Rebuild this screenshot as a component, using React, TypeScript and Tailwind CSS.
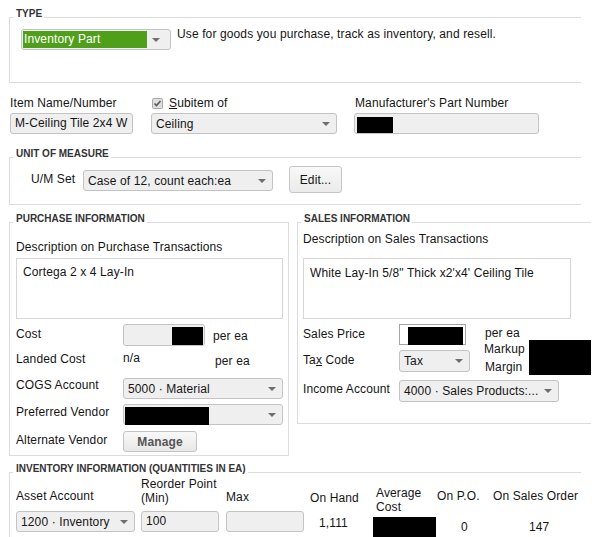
import React from "react";

function Arrow() {
  return (
    <svg width="8" height="4" viewBox="0 0 8 4" className="block">
      <path d="M0 0H8L4 4Z" fill="#6e6e6e" />
    </svg>
  );
}

function Select({ className = "", children }: { className?: string; children?: React.ReactNode }) {
  return (
    <div className={`flex items-center border border-[#c3c3c3] rounded-[3px] bg-[#efefef] shrink-0 ${className}`}>
      <div className="flex-1 min-w-0 overflow-hidden whitespace-nowrap pl-[4px]">{children}</div>
      <div className="w-[20px] shrink-0 flex justify-center">
        <Arrow />
      </div>
    </div>
  );
}

function Legend({ children }: { children: React.ReactNode }) {
  return (
    <legend className="pl-[3px] pr-[2px] pb-[7px] text-[10px] leading-[10px] font-bold tracking-normal text-[#333]">
      {children}
    </legend>
  );
}

function Checkbox() {
  return (
    <svg width="11" height="11" viewBox="0 0 11 11" className="block ml-[1px]">
      <rect x="0.5" y="0.5" width="10" height="10" rx="1" fill="#dedede" stroke="#a9a9a9" />
      <path d="M2.5 5.5L4.5 7.5L8.5 3" stroke="#595959" strokeWidth="1.6" fill="none" />
    </svg>
  );
}

const field = "border border-[#c3c3c3] rounded-[3px] bg-[#efefef] shrink-0";

export default function App() {
  return (
    <div className="w-[598px] h-[537px] overflow-hidden bg-white font-['Liberation_Sans',Arial,sans-serif] text-[12px] leading-[14px] tracking-[0.12px] text-[#151515]">
      {/* Type */}
      <fieldset className="ml-[9px] mt-[9px] w-[572px] border-t border-l border-b border-[#dcdcdc] pl-[3px] pb-[32px]">
        <Legend>TYPE</Legend>
        <div className="flex items-start mt-[3px]">
          <div className="ml-[8px] w-[150px] h-[21px] flex border border-[#c3c3c3] rounded-[3px] bg-[#efefef] p-[1px] shrink-0">
            <div className="flex-1 bg-[#4f9f1b] text-white pl-[1px] leading-[17px]">Inventory Part</div>
            <div className="w-[22px] flex items-center justify-center pr-[4px]">
              <Arrow />
            </div>
          </div>
          <div className="ml-[6px] -mt-[2px]">Use for goods you purchase, track as inventory, and resell.</div>
        </div>
      </fieldset>

      {/* Item name row */}
      <div className="flex items-start ml-[10px] mt-[13px]">
        <div className="w-[123px] shrink-0">
          <div>Item Name/Number</div>
          <div className={`mt-[3px] h-[21px] pl-[4px] leading-[19px] overflow-hidden whitespace-nowrap ${field}`}>
            M-Ceiling Tile 2x4 W
          </div>
        </div>
        <div className="ml-[18px] w-[186px] shrink-0">
          <div className="flex items-center h-[14px]">
            <Checkbox />
            <span className="ml-[6px] -mt-[1px]">
              <u>S</u>ubitem of
            </span>
          </div>
          <Select className="mt-[3px] h-[21px] w-[186px]">Ceiling</Select>
        </div>
        <div className="ml-[17px] w-[185px] shrink-0">
          <div className="ml-[1px]">Manufacturer's Part Number</div>
          <div className={`mt-[3px] h-[21px] flex items-start pl-[2px] pt-[3px] ${field}`}>
            <div className="w-[36px] h-[16px] bg-black" />
          </div>
        </div>
      </div>

      {/* Unit of measure */}
      <fieldset className="ml-[9px] mt-[15px] w-[572px] border-t border-l border-b border-[#dcdcdc] pl-[3px] pb-[11px]">
        <Legend>UNIT OF MEASURE</Legend>
        <div className="flex items-start">
          <div className="ml-[18px] w-[52px] mt-[6px] shrink-0">U/M Set</div>
          <Select className="mt-[4px] w-[190px] h-[21px]">Case of 12, count each:ea</Select>
          <div className="ml-[16px] w-[53px] h-[27px] flex items-center justify-center border border-[#c6c6c6] rounded-[3px] bg-linear-to-b from-[#f8f8f8] to-[#ebebeb] shrink-0">
            Edit...
          </div>
        </div>
      </fieldset>

      {/* Purchase + sales */}
      <div className="flex items-start ml-[9px] mt-[9px]">
        <fieldset className="w-[280px] border border-[#dcdcdc] pl-[3px] pb-[3px] shrink-0">
          <Legend>PURCHASE INFORMATION</Legend>
          <div className="pl-[3px]">
            <div className="mt-[9px]">Description on Purchase Transactions</div>
            <div className="mt-[4px] w-[267px] h-[61px] border border-[#d6d6d6] bg-white pl-[6px] pt-[6px]">
              Cortega 2 x 4 Lay-In
            </div>

            <div className="flex items-start mt-[5px]">
              <div className="w-[107px] mt-[3px] shrink-0">Cost</div>
              <div className={`w-[82px] h-[22px] flex justify-end items-start pt-[2px] pr-[1px] ${field}`}>
                <div className="w-[31px] h-[18px] bg-black" />
              </div>
              <div className="ml-[8px] mt-[5px]">per ea</div>
            </div>

            <div className="flex items-start h-[32px]">
              <div className="w-[107px] mt-[6px] shrink-0">Landed Cost</div>
              <div className="w-[92px] mt-[5px] shrink-0">n/a</div>
              <div className="mt-[8px]">per ea</div>
            </div>

            <div className="flex items-start">
              <div className="w-[107px] shrink-0">COGS Account</div>
              <Select className="w-[160px] h-[21px]">5000 · Material</Select>
            </div>

            <div className="flex items-start mt-[5px]">
              <div className="w-[107px] mt-[1px] shrink-0">Preferred Vendor</div>
              <div className="w-[160px] h-[21px] flex items-start border border-[#c3c3c3] rounded-[3px] bg-[#efefef] shrink-0">
                <div className="flex-1 pl-[1px] pt-[2px]">
                  <div className="w-[84px] h-[18px] bg-black" />
                </div>
                <div className="w-[20px] h-full flex items-center justify-center">
                  <Arrow />
                </div>
              </div>
            </div>

            <div className="flex items-start mt-[6px]">
              <div className="w-[107px] mt-[2px] shrink-0">Alternate Vendor</div>
              <div className="w-[74px] h-[21px] flex items-center justify-center border border-[#c3c3c3] rounded-[3px] bg-linear-to-b from-[#f8f8f8] to-[#e8e8e8] font-bold text-[#555] shrink-0">
                Manage
              </div>
            </div>
          </div>
        </fieldset>

        <fieldset className="ml-[8px] w-[284px] border-t border-l border-b border-[#dcdcdc] pl-[3px] pb-[21px] shrink-0">
          <Legend>SALES INFORMATION</Legend>
          <div className="pl-[2px]">
            <div className="mt-[1px]">Description on Sales Transactions</div>
            <div className="mt-[12px] w-[268px] h-[61px] border border-[#d6d6d6] bg-white pl-[6px] pt-[7px]">
              White Lay-In 5/8" Thick x2'x4' Ceiling Tile
            </div>

            <div className="flex items-start mt-[5px]">
              <div className="w-[181px] shrink-0">
                <div className="flex items-start">
                  <div className="w-[96px] mt-[3px] shrink-0">Sales Price</div>
                  <div className="w-[67px] h-[21px] border border-[#a5a5a5] bg-white flex justify-end items-start pt-[2px] pr-[2px] shrink-0">
                    <div className="w-[55px] h-[18px] bg-black" />
                  </div>
                </div>
                <div className="flex items-start mt-[5px]">
                  <div className="w-[96px] mt-[3px] shrink-0">
                    Ta<u>x</u> Code
                  </div>
                  <Select className="w-[71px] h-[22px]">Tax</Select>
                </div>
              </div>
              <div className="shrink-0">
                <div className="ml-[1px] mt-[2px]">per ea</div>
                <div className="flex items-start">
                  <div className="w-[45px] mt-[2px] shrink-0">
                    <div>Markup</div>
                    <div className="mt-[4px] ml-[1px]">Margin</div>
                  </div>
                  <div className="w-[62px] h-[35px] bg-black shrink-0" />
                </div>
              </div>
            </div>

            <div className="flex items-start mt-[5px]">
              <div className="w-[96px] mt-[2px] shrink-0">Income Account</div>
              <Select className="w-[160px] h-[22px]">4000 · Sales Products:...</Select>
            </div>
          </div>
        </fieldset>
      </div>

      {/* Inventory */}
      <fieldset className="ml-[9px] mt-[8px] w-[572px] border-t border-l border-[#dcdcdc] pl-[3px] pb-[10px]">
        <Legend>INVENTORY INFORMATION (QUANTITIES IN EA)</Legend>
        <div className="flex items-start -mt-[5px] pl-[3px]">
          <div className="w-[119px] shrink-0">
            <div className="mt-[13px]">Asset Account</div>
            <Select className="mt-[8px] h-[21px] w-[119px]">1200 · Inventory</Select>
          </div>
          <div className="ml-[6px] w-[78px] shrink-0">
            <div className="mt-[1px]">
              Reorder Point
              <br />
              (Min)
            </div>
            <div className={`mt-[6px] h-[21px] pl-[4px] leading-[19px] ${field}`}>100</div>
          </div>
          <div className="ml-[7px] w-[78px] shrink-0">
            <div className="mt-[14px]">Max</div>
            <div className={`mt-[7px] h-[21px] ${field}`} />
          </div>
          <div className="ml-[6px] w-[63px] shrink-0">
            <div className="mt-[15px]">On Hand</div>
            <div className="mt-[11px] pl-[9px]">1,111</div>
          </div>
          <div className="w-[64px] shrink-0">
            <div className="mt-[10px] pl-[3px]">
              Average
              <br />
              Cost
            </div>
            <div className="mt-[3px] w-[63px] h-[24px] bg-black" />
          </div>
          <div className="w-[56px] shrink-0">
            <div className="mt-[13px]">On P.O.</div>
            <div className="mt-[17px] pl-[24px]">0</div>
          </div>
          <div className="w-[88px] shrink-0">
            <div className="mt-[13px]">On Sales Order</div>
            <div className="mt-[17px] pl-[36px]">147</div>
          </div>
        </div>
      </fieldset>
    </div>
  );
}
